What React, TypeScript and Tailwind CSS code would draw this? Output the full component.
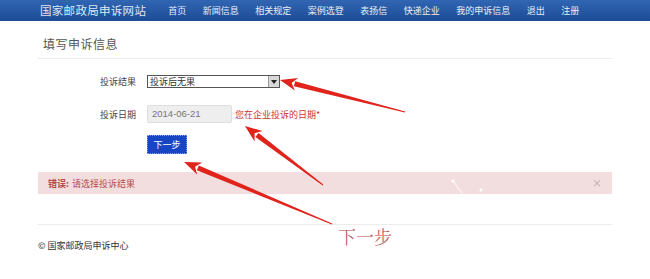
import React from 'react';

const navItems = ['首页', '新闻信息', '相关规定', '案例选登', '表扬信', '快递企业', '我的申诉信息', '退出', '注册'];

type Pt = [number, number];

// red hand-drawn style annotation arrow: tapered shaft + head
function Arrow({ head, tail }: { head: Pt; tail: Pt }) {
  const [hx, hy] = head;
  const [tx, ty] = tail;
  const dx = hx - tx;
  const dy = hy - ty;
  const len = Math.hypot(dx, dy);
  const ux = dx / len;
  const uy = dy / len;
  const nx = -uy;
  const ny = ux;
  const headLen = 15;
  const headW = 6.5;
  const bx = hx - ux * headLen;
  const by = hy - uy * headLen;
  const shaft = [
    [tx + nx * 0.5, ty + ny * 0.5],
    [bx + nx * 2.6, by + ny * 2.6],
    [bx - nx * 2.6, by - ny * 2.6],
    [tx - nx * 0.5, ty - ny * 0.5],
  ];
  const tip = [
    [hx, hy],
    [bx + nx * headW - ux * 2, by + ny * headW - uy * 2],
    [bx + ux * 3, by + uy * 3],
    [bx - nx * headW - ux * 2, by - ny * headW - uy * 2],
  ];
  const toStr = (p: number[][]) => p.map(q => q.join(',')).join(' ');
  return (
    <g>
      <polygon points={toStr(shaft)} fill="#e0241c" />
      <polygon points={toStr(tip)} fill="#e0241c" />
    </g>
  );
}

export default function App() {
  return (
    <div className="relative w-[650px] h-[279px] overflow-hidden bg-white" style={{ fontFamily: '"Noto Sans CJK SC", "Noto Sans", sans-serif' }}>
      {/* NAV */}
      <div className="h-[21px] bg-gradient-to-b from-[#3166b3] to-[#1d4b96] flex items-center pl-[40px]">
        <span className="text-[11.5px] leading-none text-[#dfe7f4] tracking-[0.3px]">国家邮政局申诉网站</span>
        <div className="flex items-center ml-[22px] gap-[16.5px]">
          {navItems.map(n => (
            <span key={n} className="text-[9px] leading-none text-[#e8eef8]">{n}</span>
          ))}
        </div>
      </div>

      <div className="px-[38px]">
        {/* TITLE */}
        <div className="pt-[15px] pl-[5px] pb-[6px] border-b border-[#ececec] text-[12px] leading-[16px] text-[#555] tracking-[0.5px]">填写申诉信息</div>

        {/* FORM */}
        <div className="pl-[62px] pt-[16px]">
          <div className="flex items-center h-[13px]">
            <span className="w-[47px] text-[9px] leading-none text-[#444]">投诉结果</span>
            <div className="w-[133px] h-[13px] border border-[#555] flex items-center bg-white">
              <span className="flex-1 pl-[2px] text-[9px] leading-none text-[#333]">投诉后无果</span>
              <div className="w-[11px] h-full bg-[#d8d8d8] border-l border-[#999] flex items-center justify-center">
                <div className="w-0 h-0 border-l-[3px] border-r-[3px] border-t-[4px] border-l-transparent border-r-transparent border-t-[#222]" />
              </div>
            </div>
            <span className="ml-[7px] text-[7px] leading-none text-[#888]">*</span>
          </div>

          <div className="flex items-center mt-[17px] h-[18px]">
            <span className="w-[47px] text-[9px] leading-none text-[#444]">投诉日期</span>
            <div className="w-[85px] h-[18px] bg-[#eee] border border-[#ddd] rounded-[2px] flex items-center pl-[4px] text-[9.5px] leading-none text-[#777]" style={{ fontFamily: '"Liberation Sans", sans-serif' }}>2014-06-21</div>
            <span className="ml-[3px] text-[9px] leading-none text-[#cc3333]">您在企业投诉的日期*</span>
          </div>

          <div className="ml-[47px] mt-[12px] w-[40px] h-[19px] bg-[#1745c4] border border-dotted border-[#8aa2e0] flex items-center justify-center text-[9px] leading-none text-white">下一步</div>
        </div>

        {/* ERROR */}
        <div className="mt-[18px] h-[22px] bg-[#f2dede] flex items-center pl-[10px] pr-[10px] text-[9px] leading-none text-[#b94a48]">
          <span className="font-bold">错误:</span>
          <span className="ml-[3px]">请选择投诉结果</span>
          <span className="ml-auto text-[10px] text-[#b8a8a8]">×</span>
        </div>

        <div className="mt-[30px] border-t border-[#ececec]" />
        <div className="pt-[16px] text-[9px] leading-none text-[#333]">© 国家邮政局申诉中心</div>
      </div>

      {/* annotation overlay */}
      <div className="absolute left-[338px] top-[227px] text-[18px] leading-none text-[#b5474f]" style={{ fontFamily: '"Noto Serif CJK SC", "Liberation Serif", serif', fontWeight: 300 }}>下一步</div>
      <svg className="absolute inset-0 pointer-events-none" width={650} height={279}>
        <Arrow head={[280, 80]} tail={[405, 112]} />
        <Arrow head={[245, 126]} tail={[323, 185]} />
        <Arrow head={[184, 162]} tail={[332, 224]} />
        <line x1={453} y1={181} x2={462} y2={193} stroke="#fff" strokeWidth={1} />
        <circle cx={453} cy={181} r={1.5} fill="#fff" />
        <circle cx={481} cy={190} r={1.5} fill="#fff" />
      </svg>
    </div>
  );
}
